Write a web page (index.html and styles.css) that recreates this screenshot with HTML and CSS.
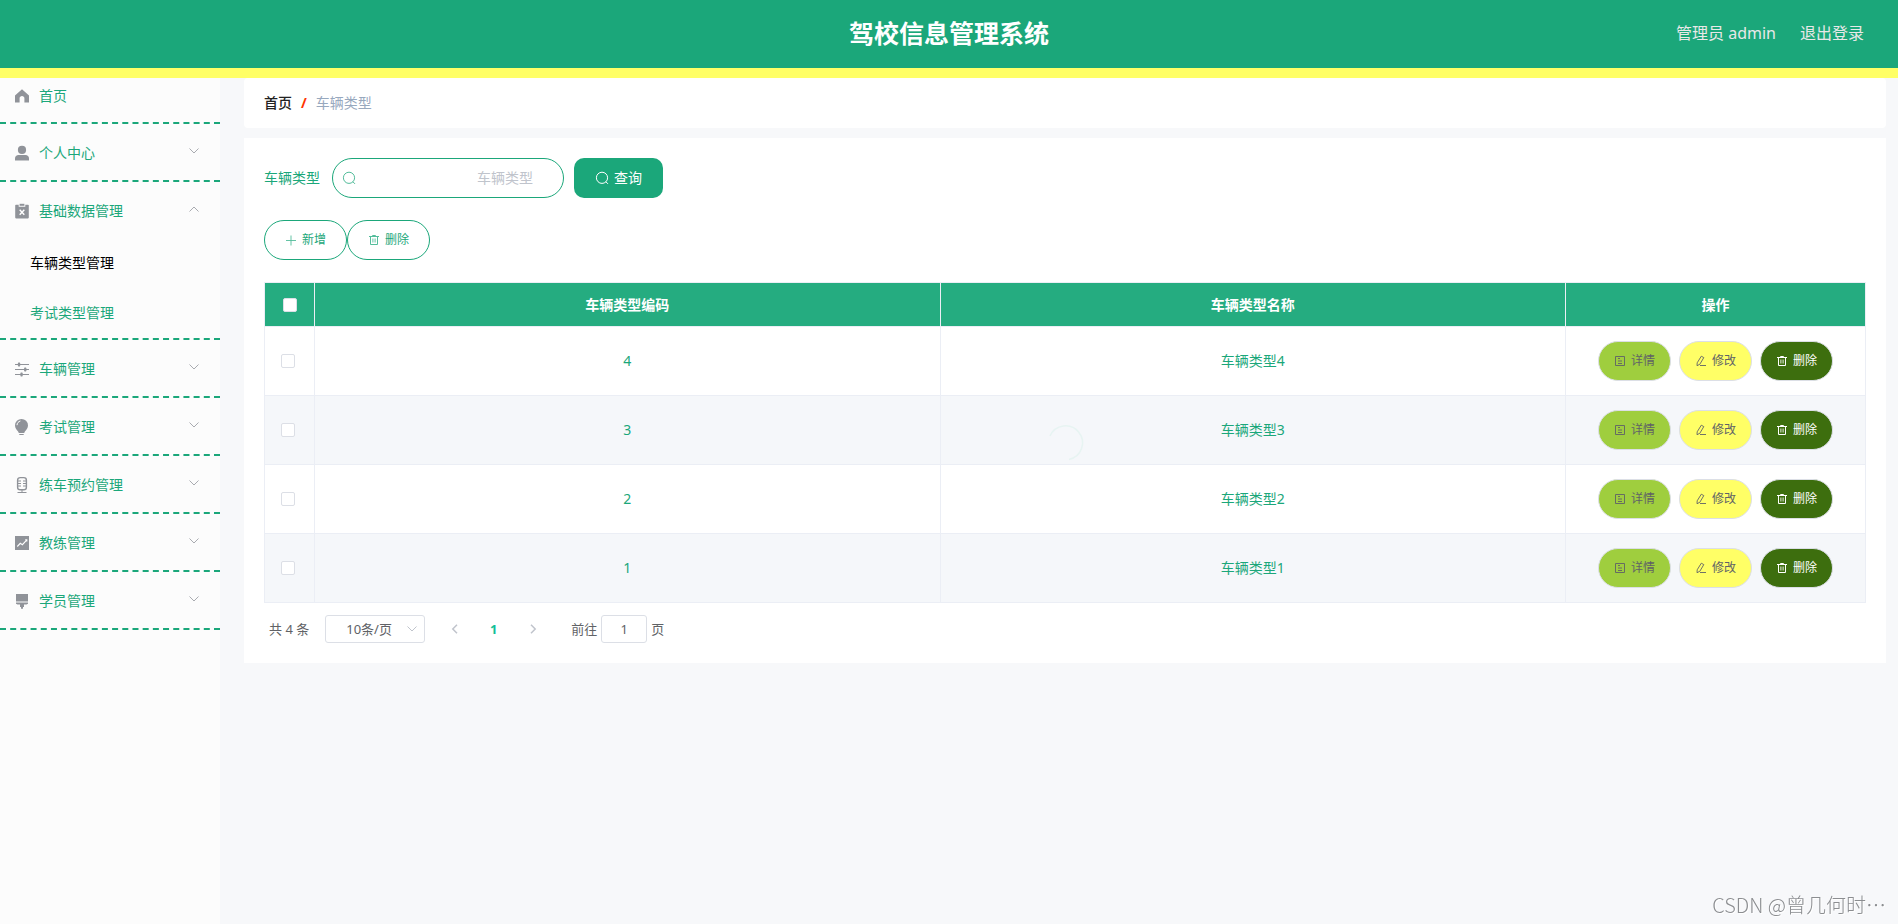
FILE: index.html
```html
<!DOCTYPE html>
<html lang="zh-CN">
<head>
<meta charset="utf-8">
<title>驾校信息管理系统</title>
<link rel="stylesheet" href="styles.css">
</head>
<body>
<svg class="sprite" aria-hidden="true">
  <symbol id="home" viewBox="0 0 18 18"><path fill="currentColor" d="M9 2.200 2 8.600V15.600h4.600v-4.400c0-1.200 1-2.200 2.400-2.200s2.400 1 2.400 2.200v4.400H16V8.600z"/></symbol>
  <symbol id="user" viewBox="0 0 18 18"><circle cx="9" cy="5.900" r="4.100" fill="currentColor"/><path fill="currentColor" d="M2 16.500v-2.300C2 12.300 3.500 11 5.400 11h7.200c1.900 0 3.400 1.300 3.400 3.200v2.300z"/></symbol>
  <symbol id="claim" viewBox="0 0 18 18"><path fill="currentColor" d="M3 2.800h2.700v1.900h6.600V2.800H15a.8.8 0 0 1 .8.800v12a.8.8 0 0 1-.8.800H3a.8.8 0 0 1-.8-.8v-12a.8.8 0 0 1 .8-.8z"/><path fill="currentColor" d="M6.600 1.800h4.800v2H6.600z"/><path stroke="#fff" stroke-width="1.400" d="m6.700 7.800 4.600 5m0-5-4.600 5"/></symbol>
  <symbol id="operation" viewBox="0 0 18 18"><path fill="none" stroke="currentColor" stroke-width="1.200" d="M2 4.500h14M2 9.500h14M2 14.500h14"/><path fill="currentColor" d="M5.300 2.500h1.500l.8 2-.8 2H5.300l-.8-2zM11.500 7.500H13l.8 2-.8 2h-1.500l-.8-2zM7.800 12.500h1.500l.8 2-.8 2H7.800l-.8-2z"/></symbol>
  <symbol id="bulb" viewBox="0 0 18 18"><path fill="currentColor" d="M8.500.9A6.500 6.500 0 0 0 2 7.400c0 2.700 1.600 4.200 3.100 6l.7 1.600h5.400l.7-1.600c1.500-1.800 3.100-3.300 3.100-6A6.500 6.500 0 0 0 8.500.9zM6.300 15.900h4.400v1H6.300z"/><path fill="none" stroke="#fff" d="M4 7.200c.1-2.100 1.400-3.700 3.400-4.200"/></symbol>
  <symbol id="mic" viewBox="0 0 18 18"><rect x="4.600" y="1.600" width="8.800" height="12.200" rx="2.600" fill="none" stroke="currentColor" stroke-width="1.400"/><path fill="none" stroke="currentColor" d="M5 5h3M5 7.500h3M5 10h3M13 5h-3M13 7.500h-3M13 10h-3M9 14v2.500M4.500 16.500h9"/></symbol>
  <symbol id="marketing" viewBox="0 0 18 18"><path fill="currentColor" d="M2 2h14v14H2z"/><path fill="none" stroke="#fff" stroke-width="1.100" d="m4.300 12.500 3-3.200 2.100 1.400 4.200-4.500M12.200 5.800h1.600v1.600"/></symbol>
  <symbol id="platform" viewBox="0 0 18 18"><path fill="currentColor" d="M3 2h12v7.600H3zM3 10.500h12v1.300l-1.600.8H11V15h-1v1.800H8V15H7v-2.400H4.600L3 11.800z"/></symbol>
  <symbol id="down" viewBox="0 0 12 12"><path fill="none" stroke="currentColor" d="m1.500 3.500 4.500 4.500 4.500-4.500"/></symbol>
  <symbol id="left" viewBox="0 0 12 12"><path fill="none" stroke="currentColor" stroke-width="1.500" d="M8 1.800 3.800 6 8 10.200"/></symbol>
  <symbol id="search" viewBox="0 0 14 14"><circle cx="7" cy="6.800" r="5.600" fill="none" stroke="currentColor"/><path stroke="currentColor" d="m10.800 10.700 2.200 2.200"/></symbol>
  <symbol id="plus" viewBox="0 0 12 12"><path stroke="currentColor" stroke-width=".9" d="M1 6.500h10M6 1.500v10"/></symbol>
  <symbol id="trash" viewBox="0 0 12 12"><path fill="none" stroke="currentColor" d="M1 2.500h10M4.500 2.500v-1h3v1M2.500 2.500v8h7v-8"/><path fill="none" stroke="currentColor" stroke-width=".9" d="M4.900 4.500v4M7.100 4.500v4"/></symbol>
  <symbol id="doc" viewBox="0 0 12 12"><path fill="none" stroke="currentColor" stroke-width=".9" d="M1.500 1.500h9v9h-9zM4 3.500h2M4 6h4M4 8.500h4"/></symbol>
  <symbol id="edit" viewBox="0 0 12 12"><path fill="none" stroke="currentColor" stroke-width=".9" d="M6.300 1.200 8.800 2.600 4.800 9.300l-2.800 1.400.2-2.900zM5 10.500h6"/></symbol>
</svg>

<header class="topbar">
  <h1 class="topbar-title">驾校信息管理系统</h1>
  <div class="topbar-user">
    <span>管理员 admin</span>
    <a href="#logout">退出登录</a>
  </div>
</header>

<div class="layout">
  <nav class="sidebar">
    <a class="menu-item menu-home" href="#home"><svg class="menu-icon"><use href="#home"/></svg><span>首页</span></a>
    <div class="menu-group"><button class="menu-item" type="button"><svg class="menu-icon"><use href="#user"/></svg><span>个人中心</span><svg class="menu-arrow"><use href="#down"/></svg></button></div>
    <div class="menu-group">
      <button class="menu-item" type="button" aria-expanded="true"><svg class="menu-icon"><use href="#claim"/></svg><span>基础数据管理</span><svg class="menu-arrow menu-arrow-up"><use href="#down"/></svg></button>
      <a class="submenu-item submenu-active" href="#vehicle-type">车辆类型管理</a>
      <a class="submenu-item" href="#exam-type">考试类型管理</a>
    </div>
    <div class="menu-group"><button class="menu-item" type="button"><svg class="menu-icon"><use href="#operation"/></svg><span>车辆管理</span><svg class="menu-arrow"><use href="#down"/></svg></button></div>
    <div class="menu-group"><button class="menu-item" type="button"><svg class="menu-icon"><use href="#bulb"/></svg><span>考试管理</span><svg class="menu-arrow"><use href="#down"/></svg></button></div>
    <div class="menu-group"><button class="menu-item" type="button"><svg class="menu-icon"><use href="#mic"/></svg><span>练车预约管理</span><svg class="menu-arrow"><use href="#down"/></svg></button></div>
    <div class="menu-group"><button class="menu-item" type="button"><svg class="menu-icon"><use href="#marketing"/></svg><span>教练管理</span><svg class="menu-arrow"><use href="#down"/></svg></button></div>
    <div class="menu-group"><button class="menu-item" type="button"><svg class="menu-icon"><use href="#platform"/></svg><span>学员管理</span><svg class="menu-arrow"><use href="#down"/></svg></button></div>
  </nav>

  <main class="main">
    <nav class="breadcrumb">
      <a class="breadcrumb-home" href="#home">首页</a>
      <span class="breadcrumb-sep">/</span>
      <span class="breadcrumb-current">车辆类型</span>
    </nav>

    <section class="card">
      <form class="search">
        <label for="type-name">车辆类型</label>
        <div class="search-box">
          <svg class="search-icon"><use href="#search"/></svg>
          <input id="type-name" class="search-input" type="text" placeholder="车辆类型">
        </div>
        <button class="search-button" type="button"><svg class="icon-14"><use href="#search"/></svg>查询</button>
      </form>

      <div class="actions">
        <button class="pill pill-outline" type="button"><svg class="icon-12"><use href="#plus"/></svg>新增</button>
        <button class="pill pill-outline" type="button"><svg class="icon-12"><use href="#trash"/></svg>删除</button>
      </div>

      <div class="table-wrap">
        <table class="table">
          <colgroup><col class="col-check"><col><col><col class="col-ops"></colgroup>
          <thead>
            <tr><th><input class="check" type="checkbox" aria-label="全选"></th><th>车辆类型编码</th><th>车辆类型名称</th><th>操作</th></tr>
          </thead>
          <tbody>
            <tr><td class="cell-check"><input class="check" type="checkbox" aria-label="选择 4"></td><td>4</td><td>车辆类型4</td><td><div class="ops"><button class="pill pill-detail" type="button"><svg class="icon-12"><use href="#doc"/></svg>详情</button><button class="pill pill-edit" type="button"><svg class="icon-12"><use href="#edit"/></svg>修改</button><button class="pill pill-delete" type="button"><svg class="icon-12"><use href="#trash"/></svg>删除</button></div></td></tr>
            <tr><td class="cell-check"><input class="check" type="checkbox" aria-label="选择 3"></td><td>3</td><td>车辆类型3</td><td><div class="ops"><button class="pill pill-detail" type="button"><svg class="icon-12"><use href="#doc"/></svg>详情</button><button class="pill pill-edit" type="button"><svg class="icon-12"><use href="#edit"/></svg>修改</button><button class="pill pill-delete" type="button"><svg class="icon-12"><use href="#trash"/></svg>删除</button></div></td></tr>
            <tr><td class="cell-check"><input class="check" type="checkbox" aria-label="选择 2"></td><td>2</td><td>车辆类型2</td><td><div class="ops"><button class="pill pill-detail" type="button"><svg class="icon-12"><use href="#doc"/></svg>详情</button><button class="pill pill-edit" type="button"><svg class="icon-12"><use href="#edit"/></svg>修改</button><button class="pill pill-delete" type="button"><svg class="icon-12"><use href="#trash"/></svg>删除</button></div></td></tr>
            <tr><td class="cell-check"><input class="check" type="checkbox" aria-label="选择 1"></td><td>1</td><td>车辆类型1</td><td><div class="ops"><button class="pill pill-detail" type="button"><svg class="icon-12"><use href="#doc"/></svg>详情</button><button class="pill pill-edit" type="button"><svg class="icon-12"><use href="#edit"/></svg>修改</button><button class="pill pill-delete" type="button"><svg class="icon-12"><use href="#trash"/></svg>删除</button></div></td></tr>
          </tbody>
        </table>
        <div class="loading"><svg class="loading-ring" viewBox="0 0 42 42"><path fill="none" stroke="#e7f4f2" stroke-width="1.500" d="M5 14A17 17 0 1 1 24 37.500"/></svg></div>
      </div>

      <div class="pagination">
        <span class="page-total">共 4 条</span>
        <div class="page-size">
          <select class="page-select" aria-label="每页条数"><option>10条/页</option></select>
          <svg class="page-caret"><use href="#down"/></svg>
        </div>
        <div class="pager">
          <button class="page-button" type="button" aria-label="上一页"><svg class="icon-12"><use href="#left"/></svg></button>
          <button class="page-button page-current" type="button">1</button>
          <button class="page-button page-next" type="button" aria-label="下一页"><svg class="icon-12"><use href="#left"/></svg></button>
        </div>
        <label class="page-jump">前往<input class="page-input" type="text" value="1">页</label>
      </div>
    </section>
  </main>
</div>
<div class="watermark">CSDN @曾几何时⋯</div>
</body>
</html>
```
FILE: styles.css
```css
* { box-sizing: border-box; }

body {
  margin: 0;
  min-height: 100vh;
  display: flex;
  flex-direction: column;
  background: #f7f8fa;
  color: #1ba77a;
  font: 14px/20px "Noto Sans", "Noto Sans CJK SC", sans-serif;
}

a { color: inherit; text-decoration: none; }
button, input, select { font: inherit; color: inherit; margin: 0; }
button { background: none; border: 0; padding: 0; cursor: pointer; }
svg { flex: none; display: block; }
.sprite { position: absolute; width: 0; height: 0; }
.icon-12 { width: 12px; height: 12px; }
.icon-14 { width: 14px; height: 14px; }

.topbar {
  display: grid;
  grid-template-columns: 1fr auto 1fr;
  align-items: center;
  height: 78px;
  padding: 0 34px 2px;
  background: #1ba77a;
  border-bottom: 10px solid #ffff66;
}
.topbar-title {
  grid-column: 2;
  margin: 0;
  color: #fff;
  font-size: 25px;
  line-height: 36px;
}
.topbar-user {
  display: flex;
  justify-content: flex-end;
  gap: 24px;
  color: #e8e8e8;
  font-size: 16px;
}

.layout { flex: 1; display: flex; }
.sidebar { width: 220px; flex: none; background: #fcfcfc; }
.menu-group { border-bottom: 2px dashed #1ba77a; }
.menu-item {
  display: flex;
  align-items: center;
  gap: 8px;
  width: 100%;
  height: 56px;
  padding: 2px 20px 0 13px;
  text-align: left;
}
.menu-home { height: 46px; padding-bottom: 8px; padding-top: 0; border-bottom: 2px dashed #1ba77a; }
.menu-icon { width: 18px; height: 18px; color: #909399; }
.menu-arrow { width: 12px; height: 12px; margin: 0 0 4px auto; color: #a9abb0; }
.menu-arrow-up { transform: rotate(180deg); }
.submenu-item { display: block; padding-left: 30px; line-height: 50px; }
.submenu-active { color: #000; }

.main { flex: 1; min-width: 0; padding: 0 12px 0 24px; }
.breadcrumb {
  display: flex;
  align-items: center;
  gap: 9px;
  height: 50px;
  margin-bottom: 10px;
  padding: 0 20px;
  background: #fff;
  border-radius: 4px;
}
.breadcrumb-home { color: #222; font-weight: 500; }
.breadcrumb-sep { color: #ff3300; font-weight: 700; }
.breadcrumb-current { color: #97a8be; }

.card { padding: 20px; background: #fff; }
.search { display: flex; align-items: center; }
.search-box { position: relative; margin: 0 10px 0 12px; }
.search-icon { position: absolute; left: 10px; top: 13px; width: 14px; height: 14px; opacity: .75; }
.search-input {
  display: block;
  width: 232px;
  height: 40px;
  padding: 0 30px 2px;
  border: 1px solid #1ba77a;
  border-radius: 20px;
  background: transparent;
  text-align: right;
}
.search-input::placeholder { color: #c0c4cc; }
.search-button {
  display: flex;
  align-items: center;
  justify-content: center;
  gap: 5px;
  width: 89px;
  height: 40px;
  border-radius: 10px;
  background: #1ba77a;
  color: #fff;
}

.actions { display: flex; margin: 22px 0; }
.pill {
  display: flex;
  align-items: center;
  justify-content: center;
  gap: 5px;
  width: 73px;
  height: 40px;
  border: 1px solid #dcdfe6;
  border-radius: 20px;
  font-size: 12px;
}
.pill-outline { width: 83px; border-color: #1ba77a; }
.pill-outline svg { opacity: .75; }
.pill-detail { background: #9fce3e; color: #606266; }
.pill-edit { background: #ffff66; color: #606266; }
.pill-delete { background: #3d6e0e; color: #fff; }

.table-wrap {
  position: relative;
  border: 1px solid #ebeef5;
  border-width: 1px 0 0 1px;
}
.table { width: 100%; table-layout: fixed; border-spacing: 0; text-align: center; }
.col-check { width: 50px; }
.col-ops { width: 300px; }
.table th, .table td {
  padding: 0;
  border: 1px solid #ebeef5;
  border-width: 0 1px 1px 0;
}
.table th { height: 44px; background: #25ac80; color: #fff; }
.table td { height: 69px; }
.table tbody tr:nth-child(even) { background: #f5f7fa; }
.table .cell-check { padding-right: 4px; }
.check {
  appearance: none;
  display: block;
  width: 14px;
  height: 14px;
  margin: 0 auto;
  border: 1px solid #dcdfe6;
  border-radius: 2px;
  background: #fff;
}
.ops { display: flex; justify-content: center; gap: 8px; }
.loading {
  position: absolute;
  inset: 0;
  display: flex;
  align-items: center;
  justify-content: center;
  pointer-events: none;
}
.loading-ring { width: 42px; height: 42px; }

.pagination {
  display: flex;
  align-items: center;
  height: 28px;
  margin-top: 12px;
  padding-left: 5px;
  color: #606266;
  font-size: 13px;
}
.page-size { position: relative; margin-left: 16px; }
.page-select {
  appearance: none;
  display: block;
  width: 100px;
  height: 28px;
  padding: 0 20px;
  border: 1px solid #dcdfe6;
  border-radius: 3px;
  background: #fff;
}
.page-caret { position: absolute; right: 7px; top: 8px; width: 12px; height: 12px; color: #c0c4cc; }
.pager { display: flex; margin: 0 19px 0 10px; }
.page-button {
  display: flex;
  align-items: center;
  justify-content: center;
  width: 39px;
  height: 28px;
  color: #c0c4cc;
}
.page-current { color: #13bf98; font-weight: 700; }
.page-next svg { transform: rotate(180deg); }
.page-jump { display: flex; align-items: center; gap: 4px; }
.page-input {
  width: 46px;
  height: 28px;
  padding: 0;
  border: 1px solid #dcdfe6;
  border-radius: 3px;
  background: #fff;
  text-align: center;
}

.watermark {
  position: fixed;
  right: 12px;
  bottom: 5px;
  color: #8c8e91;
  font: 300 20px/28px "Noto Sans CJK SC", sans-serif;
  text-shadow: 1px 1px 0 #fff;
}
```
